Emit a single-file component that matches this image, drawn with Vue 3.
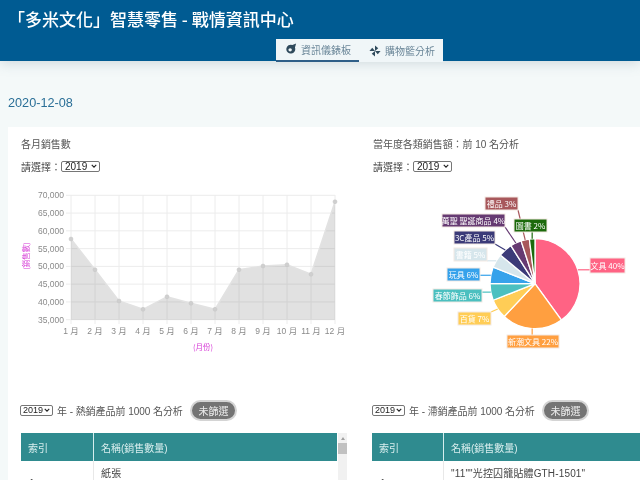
<script setup>
const ys = [342, 434, 528, 553, 515, 535, 553, 434, 423, 419, 448, 230]
const pts = ys.map((v, i) => ({ x: 71 + i * 24, y: +(125 + v / 3).toFixed(1) }))
const linePts = pts.map(p => `${p.x},${p.y}`).join(' ')
const areaPts = `71,319.7 ${linePts} 335,319.7`
const yTicks = ['70,000', '65,000', '60,000', '55,000', '50,000', '45,000', '40,000', '35,000']
  .map((t, i) => ({ t, y: 195.3 + i * 17.77 }))
const months = pts.map((p, i) => ({ x: p.x, t: `${i + 1} 月` }))

const cx = 535, cy = 283.7, r = 45
const slices = [
  { name: '文具 40%', v: 40, c: '#ff6384', box: [590, 258, 35, 15] },
  { name: '新潮文具 22%', v: 22, c: '#ff9f40', box: [507, 335, 52, 13] },
  { name: '百貨 7%', v: 7, c: '#ffcd56', box: [458, 312, 33, 13] },
  { name: '春節飾品 6%', v: 6, c: '#4bc0c0', box: [433, 289, 49, 13] },
  { name: '玩具 6%', v: 6, c: '#36a2eb', box: [447, 268, 33, 13] },
  { name: '書籍 5%', v: 5, c: '#d6e6ec', box: [454, 248, 33, 13] },
  { name: '3C產品 5%', v: 5, c: '#3b3a78', box: [454, 231, 41, 13] },
  { name: '萬聖 聖誕商品 4%', v: 4, c: '#663a72', box: [442, 214, 63, 13] },
  { name: '禮品 3%', v: 3, c: '#a8585c', box: [485, 197, 33, 13] },
  { name: '圖書 2%', v: 2, c: '#1c6a0c', box: [514, 219, 33, 13] },
]
let acc = 0
const polar = (a, rad) => [+(cx + rad * Math.sin(a)).toFixed(2), +(cy - rad * Math.cos(a)).toFixed(2)]
const arcs = slices.map(s => {
  const a0 = (acc / 100) * Math.PI * 2
  acc += s.v
  const a1 = (acc / 100) * Math.PI * 2
  const [x0, y0] = polar(a0, r)
  const [x1, y1] = polar(a1, r)
  const large = s.v > 50 ? 1 : 0
  const [bx, by, bw, bh] = s.box
  const [lx, ly] = polar((a0 + a1) / 2, r)
  const tx = Math.min(Math.max(lx, bx), bx + bw)
  const ty = Math.min(Math.max(ly, by), by + bh)
  return {
    ...s,
    d: `M${cx} ${cy}L${x0} ${y0}A${r} ${r} 0 ${large} 1 ${x1} ${y1}Z`,
    lx, ly, tx, ty, bx, by, bw, bh,
  }
})
const tables = [
  { id: 'hot', label: '年 - 熱銷產品前 1000 名分析', row: '紙張', scroll: true },
  { id: 'slow', label: '年 - 滯銷產品前 1000 名分析', row: '"11""光控囚籠貼體GTH-1501"', scroll: false },
]
</script>

<template>
  <div class="page">
    <header class="top">
      <h1 class="title">「多米文化」智慧零售 - 戰情資訊中心</h1>
      <nav class="tabs">
        <a class="tab active">
          <svg class="ic" viewBox="0 0 14 14"><path d="M13 .5 8.600 2.300A5.200 5.200 0 1 0 11.600 5.300Z" fill="#2f4a5c"/><circle cx="6" cy="8" r="2" fill="#f0f6f8"/></svg>
          資訊儀錶板
        </a>
        <a class="tab second">
          <svg class="ic" viewBox="0 0 14 14"><path d="M7 7 7 .5 10.800 3.800ZM7 7 13.500 7 10.200 10.800ZM7 7 7 13.500 3.200 10.200ZM7 7 .5 7 3.800 3.200Z" fill="#2f4a5c"/></svg>
          購物籃分析
        </a>
      </nav>
    </header>

    <div class="date">2020-12-08</div>

    <section class="card">
      <div class="col">
        <div class="ctitle">各月銷售數</div>
        <div class="pick">請選擇：<span class="selwrap"><select class="sel"><option>2019</option></select><svg class="chev" viewBox="0 0 8 5"><path d="M1 1 4 4 7 1" fill="none" stroke="#222" stroke-width="1.500"/></svg></span></div>
        <svg class="chart" viewBox="20 180 340 175">
          <g stroke="#ececec" stroke-width="1">
            <line v-for="t in yTicks" :key="t.t" x1="66" x2="335" :y1="t.y" :y2="t.y" />
            <line v-for="p in pts" :key="p.x" :x1="p.x" :x2="p.x" y1="195" y2="324" />
          </g>
          <polygon :points="areaPts" fill="rgba(120,120,120,0.22)" />
          <polyline :points="linePts" fill="none" stroke="#e2e2e2" stroke-width="1.5" />
          <circle v-for="p in pts" :key="'c' + p.x" :cx="p.x" :cy="p.y" r="2" fill="#cfcfcf" stroke="#c4c4c4" stroke-width=".5" />
          <text v-for="t in yTicks" :key="'y' + t.t" x="64" :y="t.y + 3" class="ax" text-anchor="end">{{ t.t }}</text>
          <text v-for="m in months" :key="m.t" :x="m.x" y="334" class="ax" text-anchor="middle">{{ m.t }}</text>
          <text x="203" y="350" class="axt" text-anchor="middle">(月份)</text>
          <text x="0" y="0" class="axt" text-anchor="middle" transform="translate(29 256) rotate(-90)">(銷售數)</text>
        </svg>
      </div>

      <div class="col">
        <div class="ctitle">當年度各類銷售額：前 10 名分析</div>
        <div class="pick">請選擇：<span class="selwrap"><select class="sel"><option>2019</option></select><svg class="chev" viewBox="0 0 8 5"><path d="M1 1 4 4 7 1" fill="none" stroke="#222" stroke-width="1.500"/></svg></span></div>
        <svg class="chart" viewBox="372 180 340 175">
          <path v-for="a in arcs" :key="a.name" :d="a.d" :fill="a.c" stroke="#fff" stroke-width="1.300" />
          <g v-for="a in arcs" :key="'l' + a.name">
            <line :x1="a.lx" :y1="a.ly" :x2="a.tx" :y2="a.ty" :stroke="a.c" stroke-width="1.200" />
            <rect :x="a.bx" :y="a.by" :width="a.bw" :height="a.bh" :fill="a.c" stroke="#f3e9e3" stroke-width="1" />
            <text :x="a.bx + a.bw / 2" :y="a.by + a.bh / 2 + 3" class="pl" text-anchor="middle">{{ a.name }}</text>
          </g>
        </svg>
      </div>

      <div v-for="t in tables" :key="t.id" class="col lower">
        <div class="filter">
          <span class="selwrap"><select class="sel small"><option>2019</option></select><svg class="chev" viewBox="0 0 8 5"><path d="M1 1 4 4 7 1" fill="none" stroke="#222" stroke-width="1.500"/></svg></span>
          <span class="flabel">{{ t.label }}</span>
          <button class="pill">未篩選</button>
        </div>
        <div class="tablewrap">
          <table class="tbl">
            <thead><tr><th class="idx">索引</th><th>名稱(銷售數量)</th></tr></thead>
            <tbody><tr><td class="idx">1</td><td class="nm">{{ t.row }}</td></tr></tbody>
          </table>
          <div v-if="t.scroll" class="sb"><i class="arrow"></i><i class="thumb"></i></div>
        </div>
      </div>
    </section>
  </div>
</template>

<style>
html, body { margin: 0; height: 480px; overflow: hidden; }
</style>

<style scoped>
.page {
  width: 640px;
  height: 480px;
  overflow: hidden;
  background: #f4f9f9;
  font-family: "Liberation Sans", "Noto Sans CJK TC", sans-serif;
  color: #555;
  font-size: 10px;
  filter: blur(.35px);
}
.top {
  height: 61px;
  background: #005b92;
  box-shadow: 0 2px 12px rgba(90, 120, 140, .25);
  position: relative;
  box-sizing: border-box;
  padding: 9px 0 0 8px;
}
.title {
  margin: 0;
  font: 500 17px/20px "Noto Sans CJK TC", sans-serif;
  color: #fff;
  height: 30px;
}
.tabs { display: flex; margin-left: 268px; height: 23px; }
.tab {
  display: flex;
  align-items: center;
  gap: 4px;
  background: #f0f6f8;
  color: #6a8698;
  padding: 0 8px 0 9px;
  font-size: 10px;
  box-sizing: border-box;
  height: 23px;
  width: 83px;
  white-space: nowrap;
}
.tab.second { padding-left: 10px; width: 84px; }
.tab.active { border-bottom: 2px solid #2f5f88; padding-bottom: 1px; }
.ic { width: 12px; height: 12px; flex: none; }
.date {
  margin: 34px 0 0 8px;
  font-size: 12.700px;
  line-height: 16px;
  color: #2a6f97;
}
.card {
  margin: 16px 0 0 8px;
  width: 720px;
  height: 400px;
  background: #fff;
  padding: 12px 0 0 12px;
  box-sizing: border-box;
  display: grid;
  grid-template-columns: 352px 352px;
  grid-template-rows: 261px auto;
  align-content: start;
}
.ctitle { font-size: 10px; line-height: 12px; margin-bottom: 9px; color: #555; padding-left: 1px; letter-spacing: -.05px; }
.pick { display: flex; align-items: center; height: 12px; color: #444; padding-left: 1px; }
.selwrap { position: relative; display: inline-flex; }
.sel {
  appearance: none;
  font: 10px/9px "Liberation Sans", sans-serif;
  width: 39px;
  height: 11px;
  padding: 0 0 0 3px;
  box-sizing: border-box;
  border: 1px solid #767676;
  border-radius: 2px;
  background: #fff;
  color: #222;
}
.sel.small { width: 33px; font-size: 9px; padding-left: 2px; }
.chev { position: absolute; right: 3px; top: 3px; width: 6px; height: 4px; pointer-events: none; }
.chart { display: block; width: 340px; height: 175px; margin: 8px 0 0 0; }
.ax { font: 8.500px "Liberation Sans", "Noto Sans CJK TC", sans-serif; fill: #8a8a8a; }
.axt { font: 7.500px "Noto Sans CJK TC", sans-serif; fill: #d63ad6; }
.pl { font: 8px "Noto Sans CJK TC", sans-serif; fill: #fff; }
.filter { display: flex; align-items: center; height: 21px; gap: 4px; }
.flabel { width: 129px; white-space: nowrap; color: #555; letter-spacing: -.05px; }
.pill {
  width: 47px;
  height: 21px;
  padding: 0;
  border: 2px solid #d4d4d4;
  border-radius: 11px;
  background: #747474;
  color: #eee;
  font: 10px "Noto Sans CJK TC", sans-serif;
}
.tablewrap { display: flex; margin-top: 12px; }
.tbl { border-collapse: collapse; width: 316px; flex: none; margin-left: 1px; }
.tbl th {
  background: #2f8b8f;
  color: #d8eeee;
  font-weight: 400;
  text-align: left;
  height: 28px;
  padding: 0 7px;
  border-left: 1px solid #d6eeee;
}
.tbl th:first-child, .tbl td:first-child { border-left: 0; }
.tbl td { height: 40px; padding: 0 7px; vertical-align: top; border-left: 1px solid #e8e8e8; color: #444; letter-spacing: .15px; line-height: 12px; }
.tbl td.nm { padding-top: 7px; }
.tbl .idx { width: 57px; }
.tbl td.idx { padding-top: 17px; padding-left: 8px; }
.col:nth-child(4) .tbl { width: 400px; margin-left: 0; }
.col:nth-child(4) .tbl .idx { width: 56px; }
.sb { width: 9px; margin-left: 1px; background: #f1f1f1; height: 60px; display: flex; flex-direction: column; align-items: center; }
.arrow { width: 0; height: 0; margin: 4px 0 3px; border: 2px solid transparent; border-top: 0; border-bottom: 3px solid #a0a0a0; }
.thumb { width: 9px; height: 11px; background: #c1c1c1; }
</style>
